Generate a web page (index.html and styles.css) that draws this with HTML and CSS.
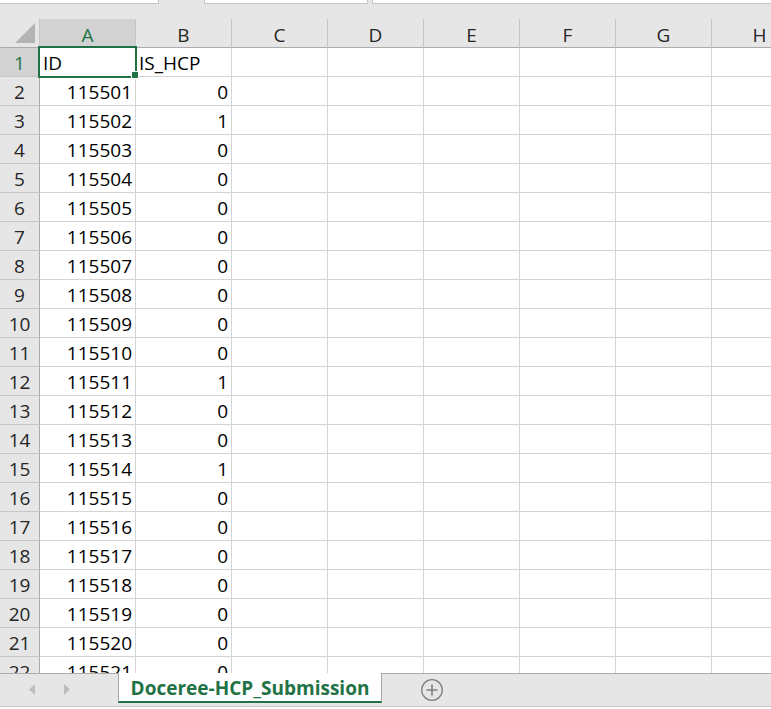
FILE: index.html
```html
<!DOCTYPE html>
<html>
<head>
<meta charset="utf-8">
<link rel="stylesheet" href="styles.css">
</head>
<body>
<div class="sheet">
  <div class="top"><div class="box b1"></div><div class="box b2"></div><div class="box b3"></div></div>
  <div class="grid">
    <div class="corner"><svg width="40" height="28" viewBox="0 0 40 28"><polygon points="35,4 35,24 15,24" fill="#b4b4b4"/></svg></div>
    <div class="ch sel">A</div><div class="ch">B</div><div class="ch">C</div><div class="ch">D</div><div class="ch">E</div><div class="ch">F</div><div class="ch">G</div><div class="ch">H</div>

    <div class="rh sel">1</div><div class="c">ID</div><div class="c">IS_HCP</div><div class="c"></div><div class="c"></div><div class="c"></div><div class="c"></div><div class="c"></div><div class="c"></div>
    <div class="rh">2</div><div class="c n">115501</div><div class="c n">0</div><div class="c"></div><div class="c"></div><div class="c"></div><div class="c"></div><div class="c"></div><div class="c"></div>
    <div class="rh">3</div><div class="c n">115502</div><div class="c n">1</div><div class="c"></div><div class="c"></div><div class="c"></div><div class="c"></div><div class="c"></div><div class="c"></div>
    <div class="rh">4</div><div class="c n">115503</div><div class="c n">0</div><div class="c"></div><div class="c"></div><div class="c"></div><div class="c"></div><div class="c"></div><div class="c"></div>
    <div class="rh">5</div><div class="c n">115504</div><div class="c n">0</div><div class="c"></div><div class="c"></div><div class="c"></div><div class="c"></div><div class="c"></div><div class="c"></div>
    <div class="rh">6</div><div class="c n">115505</div><div class="c n">0</div><div class="c"></div><div class="c"></div><div class="c"></div><div class="c"></div><div class="c"></div><div class="c"></div>
    <div class="rh">7</div><div class="c n">115506</div><div class="c n">0</div><div class="c"></div><div class="c"></div><div class="c"></div><div class="c"></div><div class="c"></div><div class="c"></div>
    <div class="rh">8</div><div class="c n">115507</div><div class="c n">0</div><div class="c"></div><div class="c"></div><div class="c"></div><div class="c"></div><div class="c"></div><div class="c"></div>
    <div class="rh">9</div><div class="c n">115508</div><div class="c n">0</div><div class="c"></div><div class="c"></div><div class="c"></div><div class="c"></div><div class="c"></div><div class="c"></div>
    <div class="rh">10</div><div class="c n">115509</div><div class="c n">0</div><div class="c"></div><div class="c"></div><div class="c"></div><div class="c"></div><div class="c"></div><div class="c"></div>
    <div class="rh">11</div><div class="c n">115510</div><div class="c n">0</div><div class="c"></div><div class="c"></div><div class="c"></div><div class="c"></div><div class="c"></div><div class="c"></div>
    <div class="rh">12</div><div class="c n">115511</div><div class="c n">1</div><div class="c"></div><div class="c"></div><div class="c"></div><div class="c"></div><div class="c"></div><div class="c"></div>
    <div class="rh">13</div><div class="c n">115512</div><div class="c n">0</div><div class="c"></div><div class="c"></div><div class="c"></div><div class="c"></div><div class="c"></div><div class="c"></div>
    <div class="rh">14</div><div class="c n">115513</div><div class="c n">0</div><div class="c"></div><div class="c"></div><div class="c"></div><div class="c"></div><div class="c"></div><div class="c"></div>
    <div class="rh">15</div><div class="c n">115514</div><div class="c n">1</div><div class="c"></div><div class="c"></div><div class="c"></div><div class="c"></div><div class="c"></div><div class="c"></div>
    <div class="rh">16</div><div class="c n">115515</div><div class="c n">0</div><div class="c"></div><div class="c"></div><div class="c"></div><div class="c"></div><div class="c"></div><div class="c"></div>
    <div class="rh">17</div><div class="c n">115516</div><div class="c n">0</div><div class="c"></div><div class="c"></div><div class="c"></div><div class="c"></div><div class="c"></div><div class="c"></div>
    <div class="rh">18</div><div class="c n">115517</div><div class="c n">0</div><div class="c"></div><div class="c"></div><div class="c"></div><div class="c"></div><div class="c"></div><div class="c"></div>
    <div class="rh">19</div><div class="c n">115518</div><div class="c n">0</div><div class="c"></div><div class="c"></div><div class="c"></div><div class="c"></div><div class="c"></div><div class="c"></div>
    <div class="rh">20</div><div class="c n">115519</div><div class="c n">0</div><div class="c"></div><div class="c"></div><div class="c"></div><div class="c"></div><div class="c"></div><div class="c"></div>
    <div class="rh">21</div><div class="c n">115520</div><div class="c n">0</div><div class="c"></div><div class="c"></div><div class="c"></div><div class="c"></div><div class="c"></div><div class="c"></div>
    <div class="rh">22</div><div class="c n">115521</div><div class="c n">0</div><div class="c"></div><div class="c"></div><div class="c"></div><div class="c"></div><div class="c"></div><div class="c"></div>

    <div class="selection"><div class="handle"></div></div>
  </div>
</div>
<div class="tabbar">
  <div class="nav">
    <svg class="arrow-l" width="7" height="11" viewBox="0 0 7 11"><polygon points="6,0 6,11 0,5.5" fill="#bdbdbd"/></svg>
    <svg class="arrow-r" width="7" height="11" viewBox="0 0 7 11"><polygon points="1,0 1,11 7,5.5" fill="#bdbdbd"/></svg>
  </div>
  <div class="tab">Doceree-HCP_Submission</div>
  <svg class="add" width="24" height="24" viewBox="0 0 24 24"><circle cx="12" cy="12" r="10.3" fill="none" stroke="#7f7f7f" stroke-width="1.3"/><path d="M12 6.5V17.5M6.5 12H17.5" stroke="#7f7f7f" stroke-width="1.6"/></svg>
</div>
<div class="foot"></div>
</body>
</html>
```
FILE: styles.css
```css
html, body {
  margin: 0;
  padding: 0;
}
body {
  width: 771px;
  height: 709px;
  overflow: hidden;
  background: #e6e6e6;
  font-family: "Open Sans", "Noto Sans", sans-serif;
}
.sheet {
  width: 771px;
  height: 673px;
  overflow: hidden;
  background: #e6e6e6;
}
.top {
  display: flex;
  height: 4px;
}
.box {
  background: #fff;
  height: 3px;
  border-bottom: 1px solid #c6c6c6;
}
.b1 {
  width: 158px;
  border-right: 1px solid #c6c6c6;
}
.b2 {
  margin-left: 45px;
  width: 162px;
  border-left: 1px solid #c6c6c6;
  border-right: 1px solid #c6c6c6;
}
.b3 {
  margin-left: 4px;
  flex: 1;
  border-left: 1px solid #c6c6c6;
}
.grid {
  margin-top: 15px;
  position: relative;
  display: grid;
  grid-template-columns: 40px repeat(8, 96px);
  grid-auto-rows: 29px;
  width: 808px;
}
.corner {
  background: #e6e6e6;
  border-right: 1px solid #c6c6c6;
  border-bottom: 1px solid #ababab;
  box-sizing: border-box;
}
.corner svg {
  display: block;
}
.ch {
  background: #e6e6e6;
  border-right: 1px solid #c6c6c6;
  border-bottom: 1px solid #ababab;
  box-sizing: border-box;
  text-align: center;
  font-size: 19px;
  line-height: 33px;
  height: 29px;
  overflow: hidden;
  color: #262626;
}
.ch.sel {
  background: #d2d2d2;
  color: #217346;
}
.rh {
  background: #e6e6e6;
  border-right: 1px solid #ababab;
  border-bottom: 1px solid #c6c6c6;
  box-sizing: border-box;
  text-align: center;
  font-size: 19px;
  line-height: 30px;
  height: 29px;
  overflow: hidden;
  color: #262626;
}
.rh.sel {
  background: #d2d2d2;
  color: #217346;
}
.c {
  background: #fff;
  border-right: 1px solid #d4d4d4;
  border-bottom: 1px solid #d4d4d4;
  box-sizing: border-box;
  height: 29px;
  padding: 0 3px;
  font-size: 19px;
  line-height: 30px;
  white-space: nowrap;
  overflow: hidden;
  color: #000;
}
.n {
  text-align: right;
}
.selection {
  position: absolute;
  left: 38px;
  top: 27px;
  width: 99px;
  height: 32px;
  border: 2px solid #217346;
  box-sizing: border-box;
  pointer-events: none;
}
.handle {
  position: absolute;
  right: -4px;
  bottom: -3px;
  width: 6px;
  height: 6px;
  background: #217346;
  border: 1px solid #fff;
}
.tabbar {
  height: 32px;
  border-top: 1px solid #ababab;
  border-bottom: 1px solid #c6c6c6;
  background: #e6e6e6;
  display: flex;
  align-items: flex-start;
}
.nav {
  width: 118px;
  display: flex;
  align-items: flex-start;
  padding-top: 10px;
}
.arrow-l {
  margin-left: 29px;
}
.arrow-r {
  margin-left: 27px;
}
.tab {
  margin-top: -1px;
  width: 264px;
  height: 30px;
  box-sizing: border-box;
  background: #fff;
  border-left: 1px solid #a6a6a6;
  border-right: 1px solid #a6a6a6;
  border-bottom: 2px solid #217346;
  text-align: center;
  font-weight: 700;
  font-size: 19px;
  line-height: 31px;
  color: #217346;
  white-space: nowrap;
}
.add {
  margin-left: 38px;
  margin-top: 4px;
}
.foot {
  height: 2px;
  background: #fff;
}
```
